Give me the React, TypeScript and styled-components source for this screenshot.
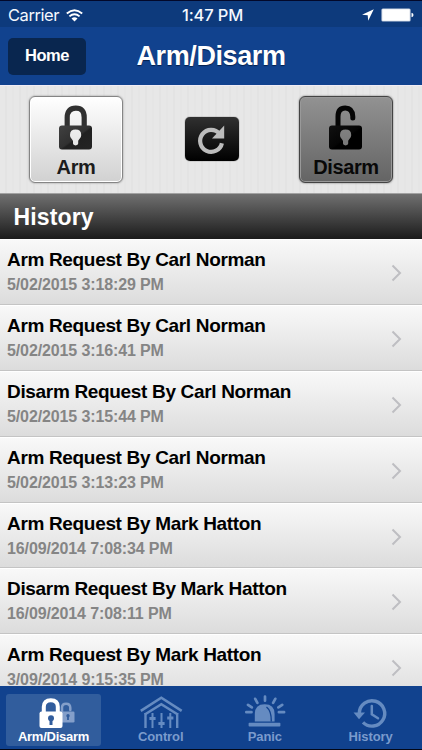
import React from "react";
import styled, { createGlobalStyle } from "styled-components";

const GlobalStyle = createGlobalStyle`
  * { box-sizing: border-box; }
  body { margin: 0; background: #000; }
`;

const Screen = styled.div`
  width: 422px;
  height: 750px;
  display: flex;
  flex-direction: column;
  overflow: hidden;
  font-family: "Liberation Sans", Arial, sans-serif;
  background: #000;
`;

const StatusBar = styled.header`
  height: 27px;
  flex: none;
  display: grid;
  grid-template-columns: 1fr auto 1fr;
  align-items: center;
  padding: 2px 8px 0;
  border-top: 1px solid #02082a;
  background: #0d3a7c;
  color: #f4f8ff;
  font-family: Inter, sans-serif;
  font-size: 17px;
  line-height: 24px;
`;

const StatusSide = styled.div<{ $end?: boolean }>`
  display: flex;
  align-items: center;
  gap: ${(p) => (p.$end ? "7px" : "7px")};
  justify-content: ${(p) => (p.$end ? "flex-end" : "flex-start")};
`;

const Carrier = styled.span`
  font-size: 16.5px;
  letter-spacing: -0.45px;
`;

const Clock = styled.span`
  font-size: 16.5px;
  font-weight: 500;
  letter-spacing: -0.15px;
  margin-left: 3px;
`;

const NavBar = styled.nav`
  height: 58px;
  flex: none;
  display: grid;
  grid-template-columns: 78px 1fr 78px;
  align-items: center;
  padding: 0 8px 1px;
  background: #11428e;
`;

const HomeButton = styled.button`
  height: 37px;
  margin-top: 1px;
  padding: 0 0 1px;
  border: 0;
  border-radius: 5px;
  background: #09264f;
  color: #fff;
  font: bold 16.5px "Liberation Sans", Arial, sans-serif;
  letter-spacing: -0.4px;
`;

const Title = styled.h1`
  margin: 1px 0 0;
  text-align: center;
  color: #fff;
  font-size: 27px;
  line-height: 32px;
  letter-spacing: -0.4px;
  text-shadow: 0 1px 1px #05204c;
`;

const ControlPanel = styled.section`
  height: 109px;
  flex: none;
  display: flex;
  justify-content: space-between;
  align-items: flex-start;
  padding: 10px 29px 0;
  border-top: 1px solid #f0ecf6;
  border-bottom: 1px solid #a2a2a2;
  background: repeating-linear-gradient(90deg, #e7e7e7 0 5px, #e3e3e3 5px 7px, #e7e7e7 7px 12px, #e5e5e5 12px 14px);
`;

const LockButton = styled.button<{ $pressed?: boolean }>`
  width: 94px;
  height: 87px;
  display: flex;
  flex-direction: column;
  align-items: center;
  padding: 7px 0 0;
  border: 1px solid ${(p) => (p.$pressed ? "#444" : "#858585")};
  border-radius: 6px;
  background: ${(p) => (p.$pressed ? "linear-gradient(#929292, #646464)" : "linear-gradient(#ffffff, #d1d1d1)")};
  box-shadow: 0 0 2px ${(p) => (p.$pressed ? "#666" : "#888")}, inset 0 0 0 1px ${(p) => (p.$pressed ? "#999" : "#fff")};
  color: ${(p) => (p.$pressed ? "#080808" : "#1c1c1c")};
  font: bold 20px/23px "Liberation Sans", Arial, sans-serif;
  letter-spacing: -0.4px;
  svg { flex: none; margin-bottom: 6px; }
`;

const RefreshButton = styled.button`
  width: 54px;
  height: 44px;
  margin: 21px 0 0 2px;
  padding: 0;
  border: 0;
  border-radius: 5px;
  background: linear-gradient(#303030, #000);
  box-shadow: 0 0 1px #000;
  svg { display: block; }
`;

const SectionHeader = styled.h2`
  height: 45px;
  flex: none;
  margin: 0;
  padding: 1px 13.5px 0;
  background: linear-gradient(#707070, #1b1b1b);
  color: #fff;
  font-size: 23px;
  letter-spacing: 0.15px;
  line-height: 45px;
`;

const HistoryList = styled.ul`
  flex: 1;
  min-height: 0;
  overflow: hidden;
  margin: 0;
  padding: 0;
  list-style: none;
`;

const HistoryRow = styled.li`
  height: 65.9px;
  display: flex;
  justify-content: space-between;
  align-items: center;
  padding: 2px 20px 0 7px;
  border-bottom: 1px solid #c4c4c4;
  background: linear-gradient(#f9f9f9, #dcdcdc);
  box-shadow: inset 0 1px #fff;
  svg { margin-top: 1px; }
`;

const RowText = styled.div`
  white-space: nowrap;
`;

const RowTitle = styled.div`
  color: #000;
  font-size: 19px;
  font-weight: bold;
  letter-spacing: -0.33px;
  line-height: 24px;
`;

const RowDate = styled.div`
  color: #858585;
  font-size: 16px;
  font-weight: bold;
  letter-spacing: -0.12px;
  line-height: 25px;
`;

const TabBar = styled.footer`
  height: 64px;
  flex: none;
  display: grid;
  grid-template-columns: 95px 95px 95px 95px;
  gap: 10.7px;
  padding: 8px 4px 2px 6px;
  border-bottom: 1px solid #020716;
  background: #11428e;
`;

const Tab = styled.button<{ $active?: boolean; $shift?: number }>`
  height: 52px;
  display: flex;
  flex-direction: column;
  align-items: center;
  padding: 0;
  margin-left: ${(p) => p.$shift ?? 0}px;
  border: 0;
  border-radius: 3px;
  background: ${(p) => (p.$active ? "#315d9d" : "transparent")};
  color: ${(p) => (p.$active ? "#fff" : "#7a9bcd")};
  font: bold 13px/16px "Liberation Sans", Arial, sans-serif;
  letter-spacing: ${(p) => (p.$active ? "-0.25px" : "-0.1px")};
  svg { flex: none; color: #658bc1; }
`;

const WifiIcon = () => (
  <svg width="17" height="13" viewBox="0 0 17 13" fill="none" stroke="white" strokeWidth="1.9">
    <path d="M.8 4.4Q8.5-2.1 16.2 4.4M3.4 7.4Q8.5 3 13.6 7.4" />
    <path d="M5.5 9.4Q8.5 7 11.5 9.4L8.5 12.4z" fill="white" stroke="none" />
  </svg>
);

const LocationIcon = () => (
  <svg width="12" height="12" viewBox="0 0 12 12" fill="white">
    <path d="M11.8.2 0 5.8l5.7.4.5 5.6z" />
  </svg>
);

const BatteryIcon = () => (
  <svg width="33" height="14" viewBox="0 0 33 14" fill="white">
    <rect x=".4" y=".4" width="29.2" height="13.2" rx="1.5" opacity=".75" />
    <rect x="1.3" y="1.3" width="27.4" height="11.4" rx=".5" />
    <path d="M30.5 4.8q2 .5 2 2.2t-2 2.2z" />
  </svg>
);

const LockIcon = ({ open }: { open?: boolean }) => (
  <svg width="36" height="46" viewBox="0 0 36 46">
    <defs>
      <linearGradient id={open ? "openLock" : "closedLock"} x1="0" y1="0" x2="1" y2="1">
        <stop offset="0" stopColor={open ? "#111" : "#414141"} />
        <stop offset=".5" stopColor={open ? "#050505" : "#303030"} />
        <stop offset=".55" stopColor={open ? "#000" : "#202020"} />
        <stop offset="1" stopColor={open ? "#000" : "#242424"} />
      </linearGradient>
    </defs>
    <path
      d={open ? "M10 24V12.5Q10 4 17.2 4T24.8 12.5V14" : "M9.2 24V13.5Q9.2 4.2 17.8 4.2T26.2 13.5V24"}
      fill="none"
      stroke={open ? "#050505" : "#303030"}
      strokeWidth={open ? 5 : 5.2}
      strokeLinecap={open ? "round" : "butt"}
    />
    <path
      fill={`url(#${open ? "openLock" : "closedLock"})`}
      fillRule="evenodd"
      d="M4 21.5H31q3 0 3 3V42.5q0 3-3 3H4q-3 0-3-3V24.5q0-3 3-3M17.6 25.5q-5.6 0-5.6 5.4c0 3.7 3.2 4.3 3 6.7v2q0 1.8 2.6 1.8t2.6-1.8v-2c-.2-2.4 3-3 3-6.7q0-5.4-5.6-5.4"
    />
  </svg>
);

const RefreshIcon = () => (
  <svg width="54" height="44" viewBox="0 0 54 44">
    <path d="M34.6 16.8A11 11 0 1 0 36.9 26.2" fill="none" stroke="#bcbcbc" strokeWidth="4.2" />
    <path d="M39.2 8.5v13H27z" fill="#bcbcbc" />
  </svg>
);

const Chevron = () => (
  <svg width="11" height="18" viewBox="0 0 11 18" fill="none" stroke="#bebec2" strokeWidth="2">
    <path d="m1.5 1.5 7.5 7.5-7.5 7.5" />
  </svg>
);

const ArmTabIcon = () => (
  <svg width="52" height="35" viewBox="0 0 52 35">
    <path d="M34 20v-6.3q0-4 4.1-4t4.2 4V16" fill="none" stroke="#849fca" strokeWidth="2.5" strokeLinecap="round" />
    <rect x="30" y="17.5" width="16.5" height="11" rx="1.3" fill="#849fca" />
    <circle cx="40" cy="21.8" r="1.7" fill="#315d9d" />
    <path d="M39.1 22h1.8v4h-1.8z" fill="#315d9d" />
    <path d="M15.8 20v-7.2q0-6.6 7-6.6t7 6.6V20" fill="none" stroke="white" strokeWidth="4" />
    <rect x="11.5" y="17.5" width="23" height="16.5" rx="2" fill="white" />
    <circle cx="23" cy="24.2" r="3" fill="#315d9d" />
    <path d="M21.5 25h3v6h-3z" fill="#315d9d" />
  </svg>
);

const ControlIcon = () => (
  <svg width="52" height="35" viewBox="0 0 52 35" fill="none" stroke="currentColor">
    <path d="M5.8 16.8 26.3 3.7l20.4 13.1M9.8 20.5 26.3 10.2l16.5 10.3" strokeWidth="2.6" />
    <path d="M10.5 19V34M42.2 19V34" strokeWidth="2.4" />
    <path d="M17.5 19v15M26.5 19v15M35.3 19v15" strokeWidth="2" />
    <path d="M14.4 24.5h6.2M23.4 29.5h6.2M32.2 24h6.2" strokeWidth="3" />
  </svg>
);

const PanicIcon = () => (
  <svg width="52" height="35" viewBox="0 0 52 35" fill="none" stroke="currentColor">
    <path d="M15.8 27.5V20q0-9.8 9.9-9.8T35.6 20v7.5z" fill="currentColor" stroke="none" />
    <path d="M27.5 13q5 3.8 4.8 14.5" stroke="#11428e" strokeWidth="1.4" />
    <path d="M10.4 29.6h30.2v2.1H10.4z" strokeWidth="1.6" strokeLinejoin="round" fill="currentColor" />
    <path d="M26 2.5v4.2M16.2 4.8l2.2 4M36.3 4.8l-2.2 4M9 10.8l3.8 2.6M43.2 10.8l-3.8 2.6M7.3 18.2h5.2M39.9 18.2h5.2" strokeWidth="2.7" strokeLinecap="round" />
  </svg>
);

const HistoryIcon = () => (
  <svg width="52" height="35" viewBox="0 0 52 35" fill="none" stroke="currentColor">
    <path d="M14.3 19A12.7 12.7 0 1 1 18 28.4" strokeWidth="3.4" />
    <path d="M8.5 18.5h11.5L14 25.3z" fill="currentColor" stroke="none" />
    <path d="M26.8 12v8.2l6.2 4" strokeWidth="2.5" strokeLinecap="round" />
  </svg>
);

const events = [
  ["Arm Request By Carl Norman", "5/02/2015 3:18:29 PM"],
  ["Arm Request By Carl Norman", "5/02/2015 3:16:41 PM"],
  ["Disarm Request By Carl Norman", "5/02/2015 3:15:44 PM"],
  ["Arm Request By Carl Norman", "5/02/2015 3:13:23 PM"],
  ["Arm Request By Mark Hatton", "16/09/2014 7:08:34 PM"],
  ["Disarm Request By Mark Hatton", "16/09/2014 7:08:11 PM"],
  ["Arm Request By Mark Hatton", "3/09/2014 9:15:35 PM"],
];

export default function App() {
  return (
    <Screen>
      <GlobalStyle />
      <StatusBar>
        <StatusSide><Carrier>Carrier</Carrier><WifiIcon /></StatusSide>
        <Clock>1:47 PM</Clock>
        <StatusSide $end><LocationIcon /><BatteryIcon /></StatusSide>
      </StatusBar>
      <NavBar>
        <HomeButton>Home</HomeButton>
        <Title>Arm/Disarm</Title>
      </NavBar>
      <ControlPanel>
        <LockButton><LockIcon />Arm</LockButton>
        <RefreshButton aria-label="Refresh"><RefreshIcon /></RefreshButton>
        <LockButton $pressed><LockIcon open />Disarm</LockButton>
      </ControlPanel>
      <SectionHeader>History</SectionHeader>
      <HistoryList>
        {events.map(([title, date]) => (
          <HistoryRow key={date}>
            <RowText>
              <RowTitle>{title}</RowTitle>
              <RowDate>{date}</RowDate>
            </RowText>
            <Chevron />
          </HistoryRow>
        ))}
      </HistoryList>
      <TabBar>
        <Tab $active><ArmTabIcon />Arm/Disarm</Tab>
        <Tab $shift={3}><ControlIcon />Control</Tab>
        <Tab><PanicIcon />Panic</Tab>
        <Tab><HistoryIcon />History</Tab>
      </TabBar>
    </Screen>
  );
}
